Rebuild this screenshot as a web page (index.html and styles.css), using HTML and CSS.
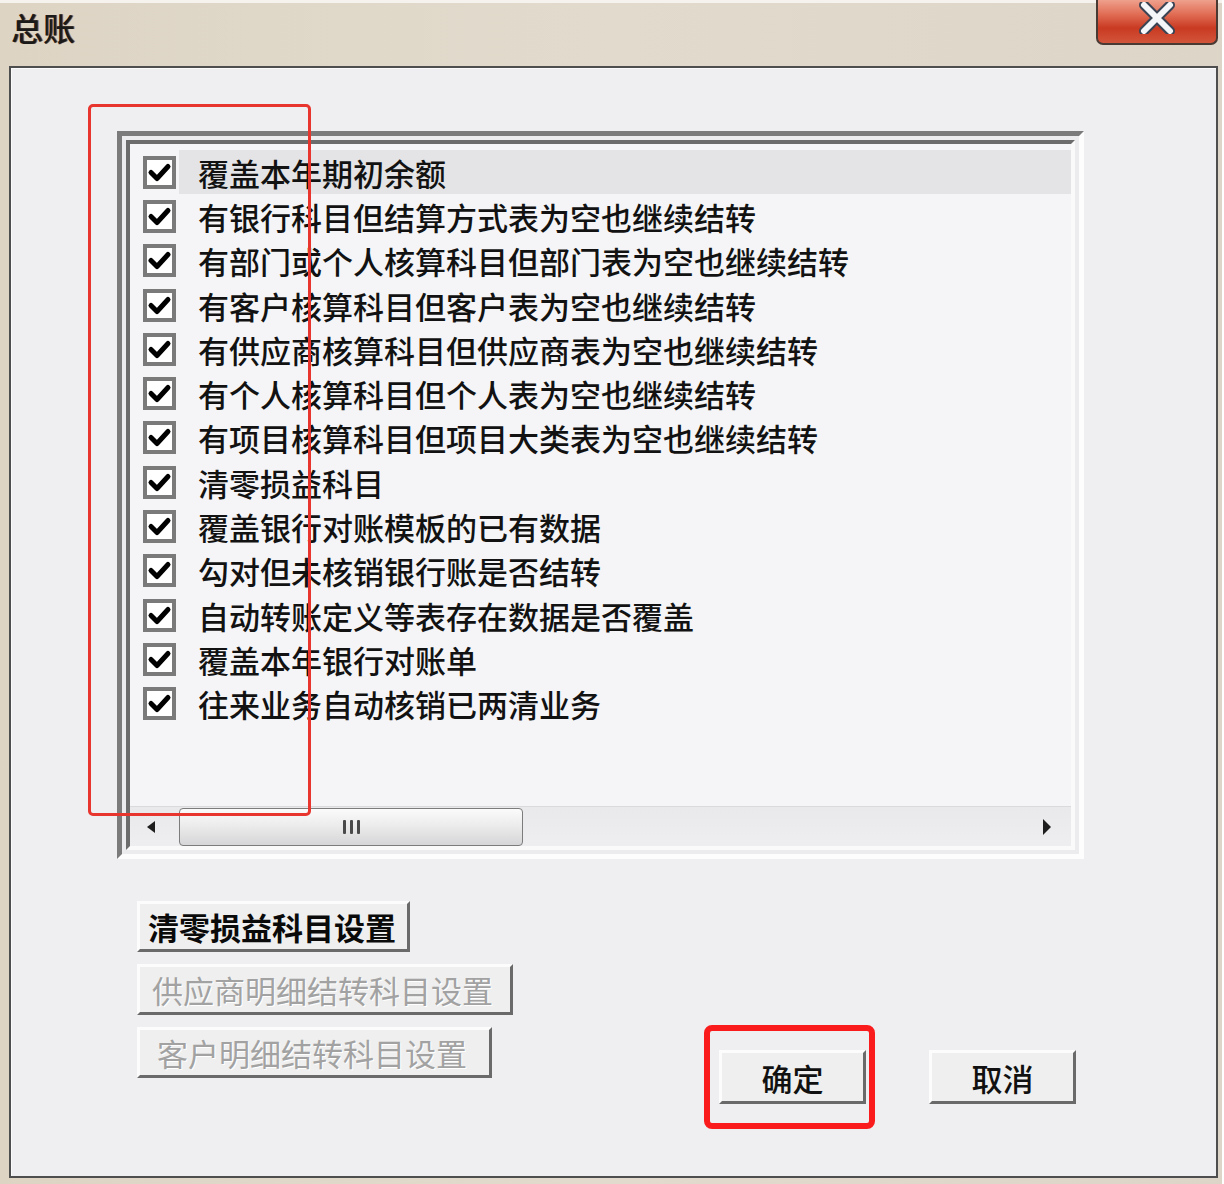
FILE: index.html
```html
<!DOCTYPE html>
<html lang="zh-CN">
<head>
<meta charset="utf-8">
<title>总账</title>
<link rel="stylesheet" href="styles.css">
</head>
<body>
<div class="window">
  <div class="titlebar">
    <div class="title">总账</div>
    <div class="close">
      <svg width="36" height="32" viewBox="0 0 36 32">
        <path d="M5 3 L31 29 M31 3 L5 29" stroke="#3a4454" stroke-width="10" stroke-linecap="round"/>
        <path d="M5 3 L31 29 M31 3 L5 29" stroke="#f4f6fa" stroke-width="6" stroke-linecap="round"/>
      </svg>
    </div>
  </div>
  <div class="client">
    <div class="listbox">
      <div class="listinner">
        <div class="rows">
          <div class="row selected"><span class="cb"></span><span class="label">覆盖本年期初余额</span></div>
          <div class="row"><span class="cb"></span><span class="label">有银行科目但结算方式表为空也继续结转</span></div>
          <div class="row"><span class="cb"></span><span class="label">有部门或个人核算科目但部门表为空也继续结转</span></div>
          <div class="row"><span class="cb"></span><span class="label">有客户核算科目但客户表为空也继续结转</span></div>
          <div class="row"><span class="cb"></span><span class="label">有供应商核算科目但供应商表为空也继续结转</span></div>
          <div class="row"><span class="cb"></span><span class="label">有个人核算科目但个人表为空也继续结转</span></div>
          <div class="row"><span class="cb"></span><span class="label">有项目核算科目但项目大类表为空也继续结转</span></div>
          <div class="row"><span class="cb"></span><span class="label">清零损益科目</span></div>
          <div class="row"><span class="cb"></span><span class="label">覆盖银行对账模板的已有数据</span></div>
          <div class="row"><span class="cb"></span><span class="label">勾对但未核销银行账是否结转</span></div>
          <div class="row"><span class="cb"></span><span class="label">自动转账定义等表存在数据是否覆盖</span></div>
          <div class="row"><span class="cb"></span><span class="label">覆盖本年银行对账单</span></div>
          <div class="row"><span class="cb"></span><span class="label">往来业务自动核销已两清业务</span></div>
        </div>
        <div class="hscroll">
          <span class="arrow-left"></span>
          <div class="thumb"><span class="grip"></span><span class="grip"></span><span class="grip"></span></div>
          <span class="arrow-right"></span>
        </div>
      </div>
    </div>
    <div class="lower">
      <div class="setbtns">
        <div class="btn set-btn w1">清零损益科目设置</div>
        <div class="btn set-btn w2 disabled">供应商明细结转科目设置</div>
        <div class="btn set-btn w3 disabled">客户明细结转科目设置</div>
      </div>
      <div class="actions">
        <div class="btn act-btn">确定</div>
        <div class="btn act-btn">取消</div>
      </div>
    </div>
  </div>
  <div class="mark mark-list"></div>
  <div class="mark mark-ok"></div>
</div>
</body>
</html>
```
FILE: styles.css
```css
* { box-sizing: border-box; }
html, body { margin: 0; padding: 0; background: #ffffff; }
body {
  font-family: "Noto Sans CJK SC", "Noto Sans", sans-serif;
  color: #111;
}
.window {
  position: relative;
  width: 1222px;
  height: 1184px;
  background: linear-gradient(90deg, #ddd4c4 0%, #e2dbcd 50%, #ddd5c7 100%);
  padding-top: 3px;
  display: flex;
  flex-direction: column;
  border-top: 3px solid #f6f3ee;
}
.titlebar {
  height: 60px;
  display: flex;
  justify-content: space-between;
  align-items: flex-start;
  padding-left: 11px;
}
.title {
  font-size: 32px;
  font-weight: 500;
  line-height: 1;
  margin-top: 5px;
  color: #1a1a1a;
  text-shadow: 1px 0 0 #8a5a40;
}
.close {
  width: 122px;
  height: 45px;
  margin-top: -6px;
  margin-right: 4px;
  border: 2px solid #4a3a34;
  border-top: none;
  border-radius: 0 0 7px 7px;
  background: linear-gradient(180deg, #eea08c 0%, #e06a52 35%, #c93a22 65%, #d2553a 100%);
  display: flex;
  justify-content: center;
  align-items: flex-start;
  padding-top: 2px;
}
.client {
  flex: 1;
  margin: 0 4px 6px 9px;
  border: 2px solid #4e4e4e;
  background: #efeef1;
  box-shadow: inset 1px 1px 0 #fbfbfc;
  display: flex;
  flex-direction: column;
}
.listbox {
  margin: 63px 0 0 106px;
  width: 967px;
  height: 728px;
  border: 5px solid;
  border-color: #7b7b7b #fdfdfd #fdfdfd #7b7b7b;
  background: #ececee;
  padding: 4px;
}
.listinner {
  height: 100%;
  border: 4px solid;
  border-color: #6c6c6c #fafafa #fafafa #6c6c6c;
  background: #f5f5f7;
  display: flex;
  flex-direction: column;
}
.rows {
  flex: 1;
  padding-top: 6px;
}
.row {
  height: 44.3px;
  display: flex;
  align-items: center;
  padding-left: 13px;
}
.cb {
  width: 33px;
  height: 33px;
  border: 4px solid #7a7a7a;
  background: #fff url("data:image/svg+xml;utf8,<svg xmlns='http://www.w3.org/2000/svg' width='25' height='25' viewBox='0 0 25 25'><path d='M4 12.5 L10 18.5 L21 6.5' fill='none' stroke='black' stroke-width='5' stroke-linecap='round' stroke-linejoin='round'/></svg>") center/25px 25px no-repeat;
  flex: none;
}
.label {
  flex: 1;
  height: 44px;
  display: flex;
  align-items: center;
  margin-left: 3px;
  padding-left: 19px;
  font-size: 31px;
  font-weight: 500;
  line-height: 1;
  color: #121212;
}
.row.selected .label { background: #e4e4e6; }
.hscroll {
  height: 40px;
  background: linear-gradient(180deg, #e9e9eb, #eeeef0);
  border-top: 1px solid #dadadc;
  display: flex;
  align-items: center;
  padding: 0 20px 0 17px;
}
.arrow-left {
  width: 0; height: 0;
  border-top: 6px solid transparent;
  border-bottom: 6px solid transparent;
  border-right: 8px solid #1e1e1e;
}
.thumb {
  margin-left: 24px;
  width: 344px;
  height: 38px;
  border: 1px solid #7c7c7c;
  border-radius: 4px;
  background: linear-gradient(180deg, #fbfbfb 0%, #ececec 45%, #d6d6d8 100%);
  display: flex;
  justify-content: center;
  align-items: center;
  gap: 4px;
}
.grip {
  width: 3px;
  height: 14px;
  background: #4a4a4a;
  border-radius: 1px;
}
.arrow-right {
  margin-left: auto;
  width: 0; height: 0;
  border-top: 8px solid transparent;
  border-bottom: 8px solid transparent;
  border-left: 8px solid #1e1e1e;
}
.lower {
  display: flex;
  align-items: flex-start;
  margin-top: 42px;
  padding-left: 126px;
}
.setbtns {
  width: 582px;
  display: flex;
  flex-direction: column;
  align-items: flex-start;
  gap: 12px;
}
.btn {
  border: 3px solid;
  border-color: #fcfcfc #6a6a6a #6a6a6a #fcfcfc;
  background: #efefef;
  font-size: 31px;
  line-height: 1;
  display: flex;
  align-items: center;
  font-weight: 500;
}
.set-btn {
  height: 51px;
  padding-left: 8px;
}
.w1 { width: 273px; color: #0a0a0a; font-weight: 700; }
.w2 { width: 376px; padding-left: 12px; }
.w3 { width: 355px; padding-left: 17px; }
.disabled { color: #a2a2a2; text-shadow: 1px 1px 0 #ffffff; font-weight: 400; }
.actions {
  display: flex;
  gap: 63px;
  margin-top: 149px;
}
.act-btn {
  width: 147px;
  height: 54px;
  justify-content: center;
  color: #111;
}
.mark {
  position: absolute;
  border-style: solid;
  pointer-events: none;
}
.mark-list {
  left: 88px;
  top: 101px;
  width: 223px;
  height: 712px;
  border-width: 3px;
  border-color: #e8352e;
  border-radius: 5px;
}
.mark-ok {
  left: 704px;
  top: 1022px;
  width: 171px;
  height: 104px;
  border-width: 6px;
  border-color: #fa1c1c;
  border-radius: 8px;
}
```
